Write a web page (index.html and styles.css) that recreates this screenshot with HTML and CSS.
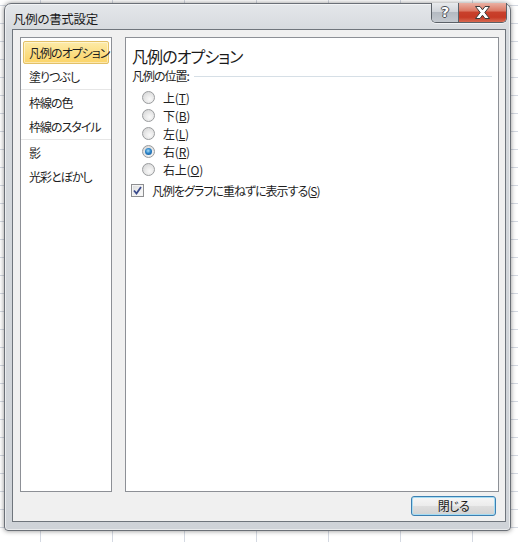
FILE: index.html
```html
<!DOCTYPE html>
<html lang="ja">
<head>
<meta charset="utf-8">
<title>凡例の書式設定</title>
<link rel="stylesheet" href="styles.css">
</head>
<body>
<div class="window">
  <div class="titlebar">
    <span class="title">凡例の書式設定</span>
    <div class="caption-buttons">
      <div class="cap-help">?</div>
      <div class="cap-close">
        <svg width="17" height="13" viewBox="0 0 17 13">
          <path d="M1.5 0.5 H6 L8.5 3.8 L11 0.5 H15.5 L10.8 6.5 L15.5 12.5 H11 L8.5 9.2 L6 12.5 H1.5 L6.2 6.5 Z" fill="#ffffff" stroke="#3b3b3b" stroke-width="1" stroke-linejoin="round"/>
        </svg>
      </div>
    </div>
  </div>
  <div class="client">
    <div class="panels">
      <ul class="nav">
        <li class="nav-item selected">凡例のオプション</li>
        <li class="nav-item">塗りつぶし</li>
        <li class="nav-sep"></li>
        <li class="nav-item">枠線の色</li>
        <li class="nav-item">枠線のスタイル</li>
        <li class="nav-sep"></li>
        <li class="nav-item">影</li>
        <li class="nav-item">光彩とぼかし</li>
      </ul>
      <div class="content">
        <h1 class="heading">凡例のオプション</h1>
        <div class="group-label"><span>凡例の位置:</span><span class="group-line"></span></div>
        <div class="radios">
          <div class="radio-row"><span class="radio"></span><span class="radio-label">上(<u>T</u>)</span></div>
          <div class="radio-row"><span class="radio"></span><span class="radio-label">下(<u>B</u>)</span></div>
          <div class="radio-row"><span class="radio"></span><span class="radio-label">左(<u>L</u>)</span></div>
          <div class="radio-row"><span class="radio checked"></span><span class="radio-label">右(<u>R</u>)</span></div>
          <div class="radio-row"><span class="radio"></span><span class="radio-label">右上(<u>O</u>)</span></div>
        </div>
        <div class="check-row">
          <span class="checkbox">
            <svg width="9" height="9" viewBox="0 0 9 9"><path d="M1 4.5 L3.5 7.5 L8 1" fill="none" stroke="#3a4a8c" stroke-width="1.8"/></svg>
          </span>
          <span>凡例をグラフに重ねずに表示する(<u>S</u>)</span>
        </div>
      </div>
    </div>
    <div class="footer">
      <button class="close-button">閉じる</button>
    </div>
  </div>
</div>
</body>
</html>
```

FILE: styles.css
```css
html, body {
  margin: 0;
  padding: 0;
}
body {
  width: 518px;
  height: 542px;
  overflow: hidden;
  font-family: "Noto Sans CJK JP", "Noto Sans", sans-serif;
  font-feature-settings: "palt";
  font-size: 12px;
  letter-spacing: -1px;
  color: #1e1e1e;
  background-color: #ffffff;
  background-image:
    linear-gradient(to right, #d4d9e2 1px, transparent 1px),
    linear-gradient(to bottom, #d4d9e2 1px, transparent 1px);
  background-size: 72px 18px, 72px 18px;
  background-position: 40px 0, 0 5px;
}
.window {
  margin: 3px 0 0 4px;
  width: 507px;
  height: 528px;
  box-sizing: border-box;
  padding: 0 4px 8px 8px;
  border-radius: 7px 7px 4px 4px;
  border: 1px solid #6b7077;
  background: linear-gradient(to bottom, #e4e7ea 0px, #d5d9dd 28px, #cfd3d8 100%);
  box-shadow: 0 0 5px rgba(0,0,0,0.45), inset 0 0 0 1px rgba(255,255,255,0.55);
  display: flex;
  flex-direction: column;
}
.titlebar {
  height: 26px;
  display: flex;
  align-items: flex-start;
  margin-left: -1px;
}
.title {
  padding-top: 7px;
  padding-left: 1px;
  line-height: 15px;
  font-size: 12.5px;
  letter-spacing: -0.3px;
  color: #1a1a1a;
}
.caption-buttons {
  margin-left: auto;
  margin-top: -1px;
  margin-right: -1px;
  display: flex;
  height: 19px;
  border: 1px solid #5b6168;
  border-top: none;
  border-radius: 0 0 5px 5px;
  overflow: hidden;
  box-shadow: 0 1px 0 rgba(255,255,255,0.6);
}
.cap-help {
  width: 27px;
  height: 19px;
  box-sizing: border-box;
  border-right: 1px solid #5b6168;
  background: linear-gradient(to bottom, #e8eaed 0%, #d1d5da 45%, #b4bac2 50%, #c4c9cf 100%);
  color: #ffffff;
  font-family: "DejaVu Sans", sans-serif;
  font-weight: bold;
  font-size: 14px;
  letter-spacing: 0;
  line-height: 19px;
  text-align: center;
  text-shadow: 1px 0 0 #4a4f55, -1px 0 0 #4a4f55, 0 1px 0 #4a4f55, 0 -1px 0 #4a4f55;
}
.cap-close {
  width: 47px;
  height: 19px;
  display: flex;
  align-items: center;
  justify-content: center;
  background: linear-gradient(to bottom, #eab1a4 0%, #dc7a66 40%, #c8402b 50%, #c63a25 75%, #d86a52 100%);
}
.client {
  flex: 1;
  margin-left: -1px;
  border: 1px solid #6f757c;
  background: #f0f0f0;
  padding: 7px 6px 5px 7px;
  display: flex;
  flex-direction: column;
}
.panels {
  height: 455px;
  display: flex;
  gap: 13px;
}
.nav {
  list-style: none;
  margin: 0;
  padding: 2px 0 0 0;
  width: 92px;
  box-sizing: border-box;
  border: 1px solid #8d9096;
  background: #ffffff;
}
.nav-item {
  height: 23px;
  margin: 1px 2px;
  box-sizing: border-box;
  border: 1px solid transparent;
  border-radius: 2px;
  padding-left: 5px;
  line-height: 21px;
  white-space: nowrap;
}
.nav-item.selected {
  border-color: #e3c167;
  background: linear-gradient(to bottom, #fdeba8 0%, #fcdf86 50%, #fbd468 100%);
  box-shadow: inset 0 0 0 1px rgba(255,255,255,0.45);
}
.nav-sep {
  height: 1px;
  margin: 0 0;
  background: #e6e6e6;
}
.content {
  flex: 1;
  box-sizing: border-box;
  border: 1px solid #8d9096;
  background: #ffffff;
  padding: 8px 6px 0 6px;
}
.heading {
  margin: 0;
  font-size: 16px;
  font-weight: normal;
  letter-spacing: -0.9px;
  line-height: 20px;
  color: #1a1a1a;
}
.group-label {
  margin-top: 2px;
  display: flex;
  align-items: center;
  line-height: 16px;
}
.group-line {
  flex: 1;
  margin-left: 5px;
  height: 0;
  border-top: 1px solid #d6dfe6;
}
.radios {
  margin-top: 4px;
}
.radio-row {
  height: 18px;
  display: flex;
  align-items: center;
  padding-left: 10px;
}
.radio-label {
  letter-spacing: -0.2px;
}
.radio {
  width: 13px;
  height: 13px;
  box-sizing: border-box;
  border-radius: 50%;
  border: 1px solid #9a9c9e;
  background: radial-gradient(circle at 60% 65%, #fafafa 0%, #e8e8e8 45%, #cfd0d1 100%);
  margin-right: 8px;
  flex: none;
  display: flex;
  align-items: center;
  justify-content: center;
}
.radio.checked::after {
  content: "";
  width: 7px;
  height: 7px;
  border-radius: 50%;
  background: radial-gradient(circle at 45% 40%, #a9dcf6 0%, #2c84c8 45%, #0f4c8a 100%);
}
.check-row {
  margin-top: 3px;
  height: 19px;
  display: flex;
  align-items: center;
  margin-left: -1px;
}
.checkbox {
  width: 13px;
  height: 13px;
  box-sizing: border-box;
  border: 1px solid #8e8f91;
  background: linear-gradient(135deg, #d8d9db 0%, #eeeeee 50%, #fbfbfb 100%);
  box-shadow: inset 0 0 0 1px #f4f4f4;
  margin-right: 8px;
  display: flex;
  align-items: center;
  justify-content: center;
  flex: none;
}
.checkbox svg {
  display: block;
}
.footer {
  display: flex;
  justify-content: flex-end;
  margin-top: 4px;
  padding-right: 3px;
}
.close-button {
  width: 85px;
  height: 20px;
  padding: 0;
  border: 1px solid #3c7fb1;
  border-radius: 3px;
  background: linear-gradient(to bottom, #f6f6f6 0%, #ececec 48%, #dedede 52%, #d2d2d2 100%);
  box-shadow: inset 0 0 0 1px #a6dcf3;
  font-family: "Noto Sans CJK JP", "Noto Sans", sans-serif;
  font-feature-settings: "palt";
  font-size: 12px;
  letter-spacing: -0.5px;
  line-height: 18px;
  color: #1a1a1a;
}
u {
  text-decoration: underline;
  text-underline-offset: 1px;
}
```
